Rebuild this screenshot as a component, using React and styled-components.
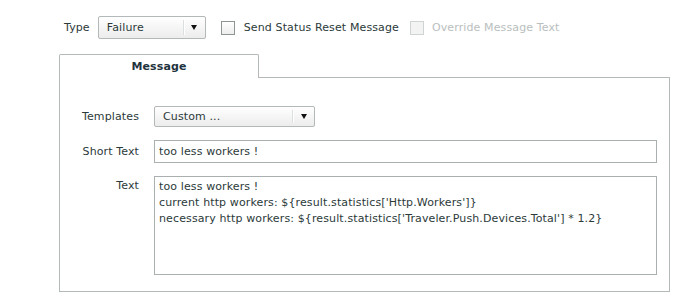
import styled, { createGlobalStyle } from "styled-components"

const GlobalStyle = createGlobalStyle`
  body {
    margin: 0;
    background: #fff;
    font-family: "DejaVu Sans", Verdana, sans-serif;
    font-size: 11px;
    letter-spacing: 0.12px;
    color: #2c3a3a;
  }
`

const Page = styled.div`
  width: 611px;
  padding: 16px 0 0 59px;
`

const TopRow = styled.div`
  display: flex;
  align-items: center;
  height: 23px;
  padding-left: 5px;
`

const Label = styled.span`
  color: ${(p) => (p.$disabled ? "#b9bebe" : "#2c3a3a")};
  margin-right: ${(p) => p.$gap || 0}px;
  white-space: nowrap;
`

const Select = styled.div`
  box-sizing: border-box;
  position: relative;
  display: flex;
  align-items: center;
  width: ${(p) => p.$width}px;
  height: ${(p) => p.$height}px;
  padding-left: 8px;
  margin-right: ${(p) => p.$gap || 0}px;
  border: 1px solid #b3b8b8;
  border-radius: 2px;
  background: linear-gradient(#ffffff, #ececec);
  color: #2c3a3a;
`

const SelectArrow = styled.span`
  position: absolute;
  top: 3px;
  bottom: 3px;
  right: 0;
  width: 21px;
  display: flex;
  align-items: center;
  justify-content: center;
  border-left: 1px solid #dcdfdf;
  box-shadow: inset 1px 0 0 #fff;

  &::after {
    content: "";
    border-left: 3.5px solid transparent;
    border-right: 3.5px solid transparent;
    border-top: 5px solid #111;
  }
`

const Checkbox = styled.span`
  box-sizing: border-box;
  width: 14px;
  height: 14px;
  margin-right: ${(p) => p.$gap || 0}px;
  border: 1px solid ${(p) => (p.$disabled ? "#d0d3d3" : "#8f9595")};
  background: ${(p) =>
    p.$disabled ? "#f3f3f3" : "linear-gradient(#ffffff, #ededed)"};
`

const TabBar = styled.div`
  display: flex;
  margin-top: 15px;
`

const Tab = styled.div`
  box-sizing: border-box;
  width: 200px;
  height: 24px;
  border: 1px solid #b3b8b8;
  border-bottom: none;
  border-radius: 2px 2px 0 0;
  display: flex;
  align-items: center;
  justify-content: center;
  font-weight: bold;
  color: #1f3440;
`

const TabFill = styled.div`
  flex: 1;
  border-bottom: 1px solid #b3b8b8;
`

const Panel = styled.div`
  border: 1px solid #b3b8b8;
  border-top: none;
  padding: 28px 12px 16px 0;
  display: grid;
  grid-template-columns: 79px 1fr;
  column-gap: 15px;
  row-gap: 13px;
  align-items: center;
`

const FieldLabel = styled.div`
  text-align: right;
  align-self: ${(p) => (p.$top ? "start" : "center")};
  padding-top: ${(p) => (p.$top ? 3 : 0)}px;
`

const Input = styled.div`
  box-sizing: border-box;
  height: 23px;
  padding: 0 4px;
  display: flex;
  align-items: center;
  border: 1px solid #aab0b0;
  background: #fff;
`

const TextArea = styled.div`
  box-sizing: border-box;
  height: 99px;
  padding: 2px 4px;
  border: 1px solid #aab0b0;
  background: #fff;
  line-height: 16px;
  white-space: pre;
`

export default function App() {
  return (
    <Page>
      <GlobalStyle />
      <TopRow>
        <Label $gap={8}>Type</Label>
        <Select $width={108} $height={23} $gap={15}>
          Failure
          <SelectArrow />
        </Select>
        <Checkbox $gap={9} />
        <Label $gap={11}>Send Status Reset Message</Label>
        <Checkbox $disabled $gap={8} />
        <Label $disabled>Override Message Text</Label>
      </TopRow>
      <TabBar>
        <Tab>Message</Tab>
        <TabFill />
      </TabBar>
      <Panel>
        <FieldLabel>Templates</FieldLabel>
        <div>
          <Select $width={161} $height={21}>
            Custom ...
            <SelectArrow />
          </Select>
        </div>
        <FieldLabel>Short Text</FieldLabel>
        <Input>too less workers !</Input>
        <FieldLabel $top>Text</FieldLabel>
        <TextArea>
          {"too less workers !\ncurrent http workers: ${result.statistics['Http.Workers']}\nnecessary http workers: ${result.statistics['Traveler.Push.Devices.Total'] * 1.2}"}
        </TextArea>
      </Panel>
    </Page>
  )
}
